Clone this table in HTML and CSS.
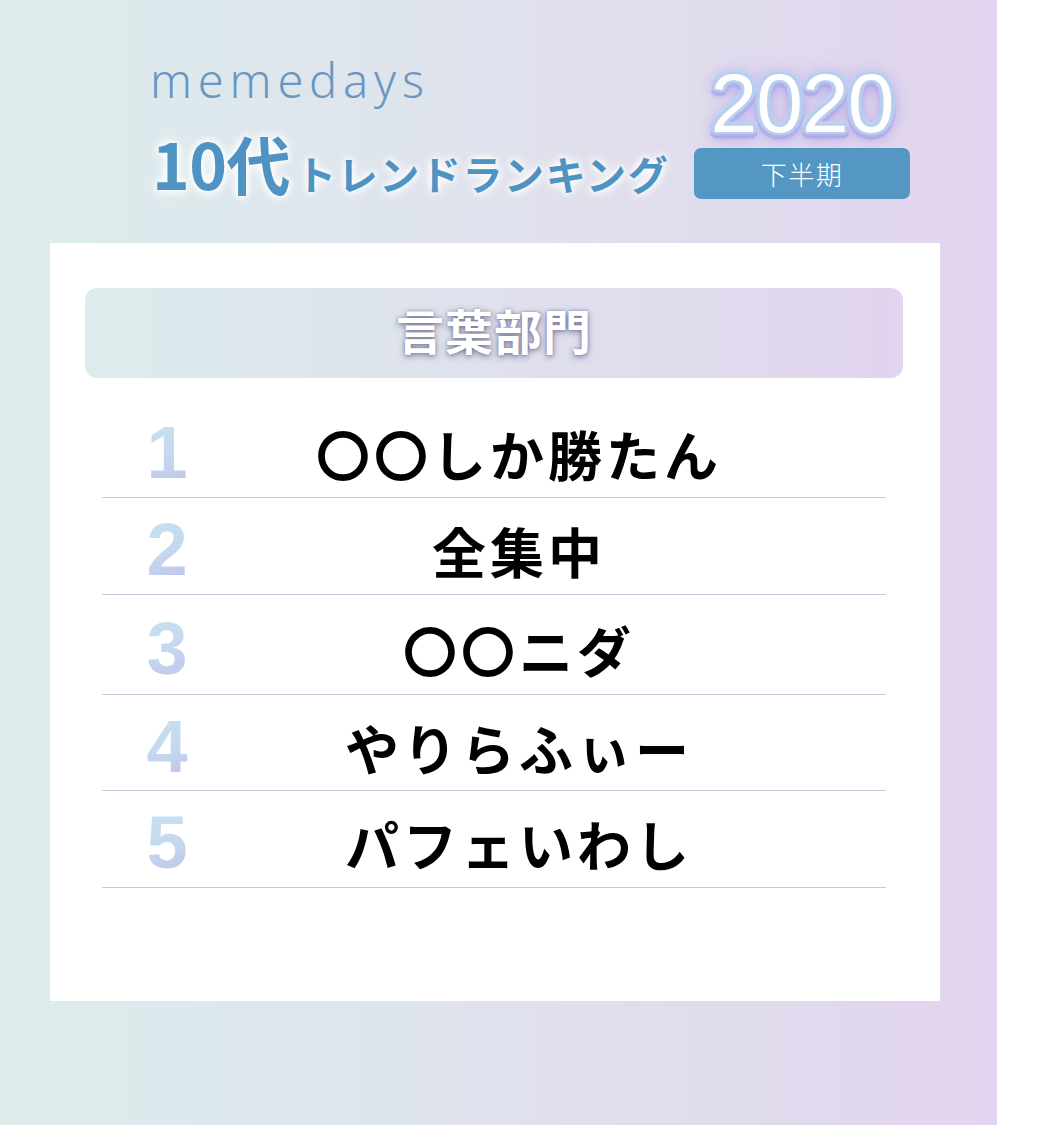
FILE: index.html
```html
<!DOCTYPE html>
<html lang="ja">
<head>
<meta charset="utf-8">
<title>memedays 10代トレンドランキング 2020 下半期</title>
<link rel="stylesheet" href="styles.css">
</head>
<body>
<div class="page">
  <header class="head">
    <div class="brand">
      <div class="logo">memedays</div>
      <h1 class="title"><span class="big">10代</span><span class="small">トレンドランキング</span></h1>
    </div>
    <div class="year-block">
      <div class="year">2020</div>
      <div class="term">下半期</div>
    </div>
  </header>
  <main class="card">
    <h2 class="section">言葉部門</h2>
    <ol class="ranking">
      <li class="row"><span class="num">1</span><span class="word">〇〇しか勝たん</span></li>
      <li class="row"><span class="num">2</span><span class="word">全集中</span></li>
      <li class="row"><span class="num">3</span><span class="word">〇〇ニダ</span></li>
      <li class="row"><span class="num">4</span><span class="word">やりらふぃー</span></li>
      <li class="row"><span class="num">5</span><span class="word">パフェいわし</span></li>
    </ol>
  </main>
</div>
</body>
</html>
```

FILE: styles.css
```css
* { box-sizing: border-box; }
html, body { margin: 0; padding: 0; background: #fff; }
body { font-family: "Noto Sans CJK JP", "Noto Sans", sans-serif; }

.page {
  width: 997px;
  height: 1125px;
  background: linear-gradient(90deg, #dcedec 0%, #dfe3ec 45%, #e2d4ee 100%);
  padding-top: 52px;
}

.head {
  display: flex;
  justify-content: space-between;
  align-items: flex-start;
  padding: 0 87px 0 152px;
  height: 191px;
}

.logo {
  font-family: "Noto Sans", sans-serif;
  font-weight: 300;
  font-size: 47px;
  letter-spacing: 5.8px;
  color: #6a96c4;
  line-height: 56px;
  margin-left: -2px;
}

.title {
  margin: 18px 0 0;
  color: #4f93c2;
  font-weight: 700;
  line-height: 72px;
  white-space: nowrap;
  text-shadow: 0 0 6px #fff, 0 0 10px #fff, 0 0 14px rgba(255,255,255,.9);
}
.title .big { font-size: 64px; letter-spacing: -0.5px; }
.title .small { font-size: 40px; letter-spacing: 1.6px; margin-left: 6px; }

.year-block {
  width: 216px;
  display: flex;
  flex-direction: column;
  align-items: center;
  padding-top: 8px;
}
.year {
  font-family: "Liberation Sans", Arial, sans-serif;
  font-size: 84px;
  line-height: 86px;
  color: #fff;
  letter-spacing: -1px;
  text-shadow:
    2px 0 0 #b9cdee, -2px 0 0 #b9cdee, 0 2px 0 #b9cdee, 0 -2px 0 #b9cdee,
    2px 2px 0 #b9cdee, -2px -2px 0 #b9cdee, 2px -2px 0 #b9cdee, -2px 2px 0 #b9cdee,
    4px 0 0 #b8caee, -4px 0 0 #b8caee, 0 4px 0 #b2b4ea, 0 -4px 0 #c0d3f0,
    4px 4px 1px #b0afea, -4px 4px 1px #b0afea, 4px -4px 1px #c0d3f0, -4px -4px 1px #c0d3f0,
    0 5px 1px #aeaae8, 2px 6px 2px #aeaae8, -2px 6px 2px #aeaae8,
    0 4px 14px rgba(140,120,230,.8), 0 0 20px rgba(170,150,240,.55);
}
.term {
  margin-top: 2px;
  width: 216px;
  height: 51px;
  border-radius: 7px;
  background: #5597c3;
  color: #fff;
  font-size: 26px;
  font-weight: 300;
  letter-spacing: 1.5px;
  line-height: 51px;
  text-align: center;
}

.card {
  margin: 0 57px 0 50px;
  height: 758px;
  background: #fff;
  padding: 45px 37px 0 35px;
}

.section {
  margin: 0;
  height: 90px;
  border-radius: 12px;
  background: linear-gradient(90deg, #dcecec 0%, #dfe1ec 50%, #e1d4ee 100%);
  color: #fff;
  font-size: 48px;
  font-weight: 700;
  letter-spacing: 1px;
  line-height: 82px;
  text-align: center;
  text-shadow: 0 2px 6px rgba(60,60,110,.6), 0 0 3px rgba(60,60,110,.4);
}

.ranking {
  list-style: none;
  margin: 23px 17px 0 17px;
  padding: 0;
}
.row {
  display: grid;
  grid-template-columns: 130px 1fr;
  align-items: center;
  height: 97px;
  border-bottom: 1px solid #c5c9dc;
}
.row:nth-child(3) { height: 100px; }
.row:nth-child(4) { height: 96px; }
.num {
  font-family: "Liberation Sans", Arial, sans-serif;
  font-weight: 700;
  font-size: 74px;
  line-height: 1;
  text-align: center;
  background: linear-gradient(160deg, #c6eaf2 0%, #c4d6ee 55%, #bdb6e6 100%);
  -webkit-background-clip: text;
  background-clip: text;
  color: transparent;
  margin-top: 8px;
}
.word {
  padding-right: 80px;
  text-align: center;
  font-size: 54px;
  font-weight: 700;
  letter-spacing: 4px;
  color: #000;
  line-height: 1;
  margin-top: 10px;
  white-space: nowrap;
}
```
